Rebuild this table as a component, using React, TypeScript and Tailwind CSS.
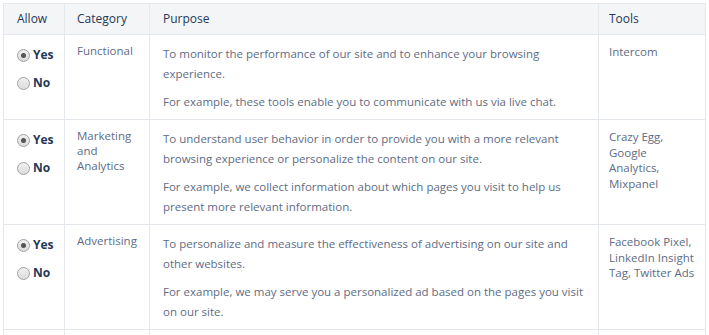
const rows = [
  {
    category: ['Functional'],
    purpose: [
      'To monitor the performance of our site and to enhance your browsing experience.',
      'For example, these tools enable you to communicate with us via live chat.',
    ],
    tools: 'Intercom',
  },
  {
    category: ['Marketing', 'and', 'Analytics'],
    purpose: [
      'To understand user behavior in order to provide you with a more relevant browsing experience or personalize the content on our site.',
      'For example, we collect information about which pages you visit to help us present more relevant information.',
    ],
    tools: 'Crazy Egg, Google Analytics, Mixpanel',
  },
  {
    category: ['Advertising'],
    purpose: [
      'To personalize and measure the effectiveness of advertising on our site and other websites.',
      'For example, we may serve you a personalized ad based on the pages you visit on our site.',
    ],
    tools: 'Facebook Pixel, LinkedIn Insight Tag, Twitter Ads',
  },
];

function Radio({ checked, label }: { checked: boolean; label: string }) {
  return (
    <label className="flex items-center gap-[3px] h-[16px]">
      <span className="flex h-[13px] w-[13px] items-center justify-center rounded-full border border-[#a3a3a3] bg-gradient-to-b from-[#f0f0f0] to-[#dcdcdc]">
        {checked && <span className="h-[5px] w-[5px] rounded-full bg-[#555]" />}
      </span>
      <span className="text-[12px] font-bold text-[#253858]">{label}</span>
    </label>
  );
}

export default function App() {
  return (
    <div className="min-h-screen bg-white p-[3px] text-[11.5px] text-[#5e6c84]" style={{ fontFamily: '"Open Sans", sans-serif' }}>
      <table className="w-[702px] table-fixed border-collapse">
        <colgroup>
          <col className="w-[61px]" />
          <col className="w-[85px]" />
          <col className="w-[449px]" />
          <col className="w-[107px]" />
        </colgroup>
        <thead>
          <tr className="h-[31px] bg-[#f4f5f7] text-left text-[12px] text-[#253858]">
            <th className="border border-[#e4e7eb] px-[13px] font-normal">Allow</th>
            <th className="border border-[#e4e7eb] px-[12px] font-normal">Category</th>
            <th className="border border-[#e4e7eb] px-[13px] font-normal">Purpose</th>
            <th className="border border-[#e4e7eb] px-[10px] font-normal">Tools</th>
          </tr>
        </thead>
        <tbody>
          {rows.map((r) => (
            <tr key={r.category.join(' ')} className="align-top">
              <td className="border border-[#e4e7eb] pl-[13px] pt-[12px]">
                <div className="flex flex-col gap-[12px]">
                  <Radio checked label="Yes" />
                  <Radio checked={false} label="No" />
                </div>
              </td>
              <td className="border border-[#e4e7eb] px-[12px] pt-[8px] leading-[15px]">
                {r.category.map((c) => (
                  <div key={c}>{c}</div>
                ))}
              </td>
              <td className="border border-[#e4e7eb] px-[13px] pt-[9px] pb-[7px] leading-[20px]">
                <p>{r.purpose[0]}</p>
                <p className="mt-[8px]">{r.purpose[1]}</p>
              </td>
              <td className="border border-[#e4e7eb] pl-[10px] pr-[9px] pt-[9px] leading-[15.5px]">{r.tools}</td>
            </tr>
          ))}
          <tr className="h-[10px]">
            <td className="border border-[#e4e7eb]" />
            <td className="border border-[#e4e7eb]" />
            <td className="border border-[#e4e7eb]" />
            <td className="border border-[#e4e7eb]" />
          </tr>
        </tbody>
      </table>
    </div>
  );
}
